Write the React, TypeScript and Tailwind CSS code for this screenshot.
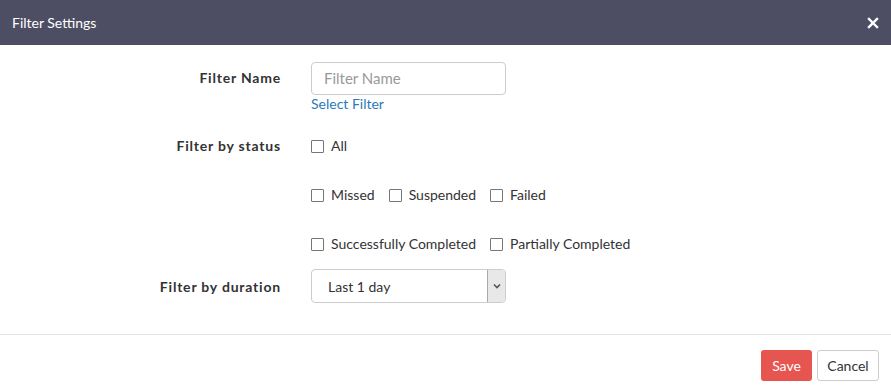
import React from "react";

function Check({ label }: { label: string }) {
  return (
    <label className="flex items-center gap-[7px] mr-[14px]">
      <span className="w-[13px] h-[13px] border border-[#767676] rounded-[1px] bg-white inline-block" />
      <span>{label}</span>
    </label>
  );
}

export default function App() {
  return (
    <div className="w-[891px] h-[390px] bg-white text-[14px] text-[#333]" style={{ fontFamily: "Lato, 'Open Sans', sans-serif" }}>
      <div className="h-[45px] bg-[#4d4e63] flex items-center justify-between pl-[12px] pr-[12px] text-white">
        <span className="text-[14px]">Filter Settings</span>
        <svg width="12" height="12" viewBox="0 0 12 12">
          <path d="M2 2 L10 10 M10 2 L2 10" stroke="white" strokeWidth="2.4" strokeLinecap="square" />
        </svg>
      </div>
      <div className="h-[290px] border-b border-[#e5e5e5] pt-[17px]">
        <div className="flex">
          <div className="w-[281px] text-right font-bold tracking-[0.8px] pt-[5px]">Filter Name</div>
          <div className="ml-[30px]">
            <div className="w-[195px] h-[33px] border border-[#ccc] rounded-[4px] flex items-center pl-[12px] text-[#999] text-[15px]">Filter Name</div>
            <div className="text-[#2a7ab8] mt-[1px] leading-[16px]">Select Filter</div>
          </div>
        </div>
        <div className="flex mt-[25px]">
          <div className="w-[281px] text-right font-bold tracking-[0.8px] leading-[18px]">Filter by status</div>
          <div className="ml-[30px] flex flex-col gap-[31px] leading-[18px]">
            <div className="flex"><Check label="All" /></div>
            <div className="flex"><Check label="Missed" /><Check label="Suspended" /><Check label="Failed" /></div>
            <div className="flex"><Check label="Successfully Completed" /><Check label="Partially Completed" /></div>
          </div>
        </div>
        <div className="flex mt-[16px] items-center">
          <div className="w-[281px] text-right font-bold tracking-[0.8px]">Filter by duration</div>
          <div className="ml-[30px] w-[195px] h-[34px] border border-[#ccc] rounded-[4px] flex overflow-hidden">
            <div className="flex-1 flex items-center pl-[16px]">Last 1 day</div>
            <div className="w-[18px] bg-[#e8e8e8] border-l border-[#aaa] flex items-center justify-center">
              <svg width="8" height="6" viewBox="0 0 8 6"><path d="M1 1.5 L4 4.5 L7 1.5" stroke="#555" strokeWidth="1.6" fill="none" /></svg>
            </div>
          </div>
        </div>
      </div>
      <div className="flex justify-end gap-[5px] pr-[12px] pt-[15px]">
        <button className="h-[31px] w-[51px] bg-[#e75550] text-white rounded-[3px] text-[14px]">Save</button>
        <button className="h-[31px] w-[62px] border border-[#ccc] rounded-[3px] text-[14px] text-[#333]">Cancel</button>
      </div>
    </div>
  );
}
